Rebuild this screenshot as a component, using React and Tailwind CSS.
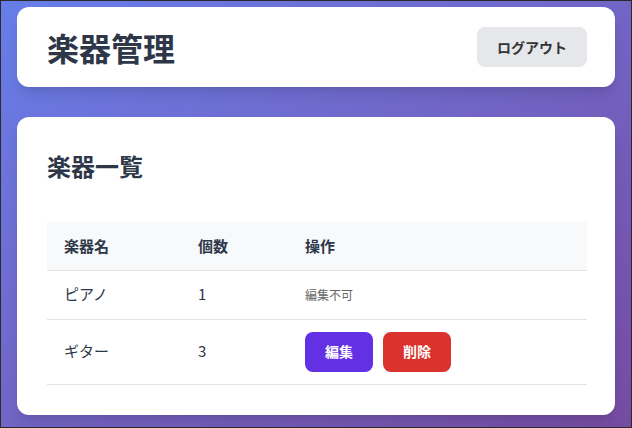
import React from 'react'

const items = [
  { name: 'ピアノ', count: 1, editable: false },
  { name: 'ギター', count: 3, editable: true },
]

export default function App() {
  return (
    <div
      className="w-[632px] h-[428px] border border-[#2b2b2b] bg-gradient-to-br from-[#667eea] to-[#764ba2] px-4 pt-[6px] overflow-hidden"
      style={{ fontFamily: '"Noto Sans CJK JP", "Noto Sans", sans-serif' }}
    >
      {/* ヘッダー */}
      <div className="h-[80px] bg-white rounded-xl shadow-lg flex items-center justify-between pl-[30px] pr-[28px]">
        <h1 className="text-[32px] font-bold text-[#2d3748] leading-none">楽器管理</h1>
        <button className="w-[110px] h-[40px] bg-[#e5e7eb] rounded-lg text-[14px] font-bold text-[#333]">
          ログアウト
        </button>
      </div>

      {/* 一覧 */}
      <div className="mt-[30px] h-[298px] bg-white rounded-xl shadow-lg pl-[30px] pr-[28px] pt-[34px]">
        <h2 className="text-[24px] font-bold text-[#2d3748] leading-[30px]">楽器一覧</h2>
        <table className="mt-[41px] w-full text-[15px] text-[#2d3748] border-collapse">
          <thead>
            <tr className="h-[48px] bg-[#f8f9fa] border-b border-[#e2e2e2]">
              <th className="w-[134px] text-left font-bold pl-[17px]">楽器名</th>
              <th className="w-[107px] text-left font-bold pl-[17px]">個数</th>
              <th className="text-left font-bold pl-[17px]">操作</th>
            </tr>
          </thead>
          <tbody>
            {items.map((it) => (
              <tr key={it.name} className={`${it.editable ? 'h-[65px]' : 'h-[49px]'} border-b border-[#e2e2e2]`}>
                <td className="pl-[17px]">{it.name}</td>
                <td className="pl-[17px]">{it.count}</td>
                <td className="pl-[17px]">
                  {it.editable ? (
                    <div className="flex gap-[10px]">
                      <button className="w-[68px] h-[40px] rounded-lg bg-[#6430e3] text-white text-[14px] font-bold">編集</button>
                      <button className="w-[68px] h-[40px] rounded-lg bg-[#da322c] text-white text-[14px] font-bold">削除</button>
                    </div>
                  ) : (
                    <span className="text-[12px] text-[#666]">編集不可</span>
                  )}
                </td>
              </tr>
            ))}
          </tbody>
        </table>
      </div>
    </div>
  )
}
